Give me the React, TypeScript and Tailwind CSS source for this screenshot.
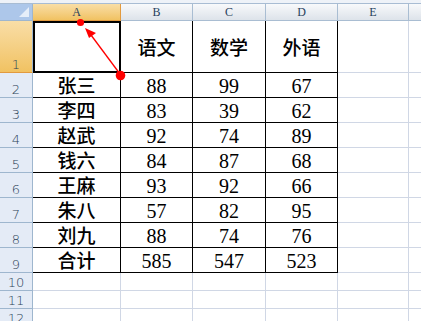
import React from "react";

const cols = ["A", "B", "C", "D", "E", "F"];
const data: string[][] = [
  ["", "语文", "数学", "外语"],
  ["张三", "88", "99", "67"],
  ["李四", "83", "39", "62"],
  ["赵武", "92", "74", "89"],
  ["钱六", "84", "87", "68"],
  ["王麻", "93", "92", "66"],
  ["朱八", "57", "82", "95"],
  ["刘九", "88", "74", "76"],
  ["合计", "585", "547", "523"],
];
const rowHeights = [52, 25, 25, 25, 25, 25, 25, 25, 25, 18, 18, 18];

export default function App() {
  const headFont = { fontFamily: '"Liberation Serif", "Noto Sans CJK SC", serif' };
  return (
    <div className="relative w-[421px] h-[321px] overflow-hidden bg-white">
      <div className="h-[4px] bg-[#eef2f8] border-b border-[#a8bcd3]" />
      <div
        className="grid"
        style={{
          gridTemplateColumns: "33px 88px 72px 73px 72px 71px 72px",
          gridTemplateRows: "17px " + rowHeights.map((h) => h + "px").join(" "),
        }}
      >
        <div className="relative bg-[#adc7ea] border-r border-b border-[#9eb6ce]">
          <div className="absolute right-[3px] bottom-[3px] w-0 h-0 border-l-[10px] border-l-transparent border-b-[10px] border-b-[#e6eef9]" />
        </div>
        {cols.map((c, i) => (
          <div
            key={c}
            className={
              "flex items-center justify-center text-[12px] text-[#27415c] border-b border-r " +
              (i === 0
                ? "bg-gradient-to-b from-[#f9dea6] to-[#f1c261] border-r-[#e29a3f] border-b-[#e29a3f]"
                : "bg-gradient-to-b from-[#f8f9fb] to-[#dde3ea] border-[#a9bdd2]")
            }
            style={headFont}
          >
            {c}
          </div>
        ))}
        {rowHeights.map((h, r) => {
          const rowData = data[r];
          return (
            <React.Fragment key={r}>
              <div
                className={
                  "flex items-end justify-center pb-[1px] text-[13px] leading-none text-[#2b4256] border-r border-b " +
                  (r === 0
                    ? "bg-gradient-to-b from-[#f9dea6] to-[#f1c261] border-r-[#9eb6ce] border-b-[#e29a3f]"
                    : "bg-[#e4ebf6] border-[#9eb6ce]")
                }
                style={{ fontFamily: '"DejaVu Sans", sans-serif', fontWeight: 300 }}
              >
                {r + 1}
              </div>
              {cols.map((c, ci) => {
                const inTable = rowData !== undefined && ci < 4;
                const val = inTable ? rowData[ci] : "";
                const isNum = /^\d+$/.test(val);
                return (
                  <div
                    key={c}
                    className={
                      "relative flex items-center justify-center border-r border-b text-black " +
                      (inTable ? "border-black " : "border-[#d0d7e5] ") +
                      (isNum ? "text-[20px] pt-[2px]" : "text-[19px] pt-[1px] font-medium")
                    }
                    style={{
                      fontFamily: isNum
                        ? '"Liberation Serif", serif'
                        : '"Noto Sans CJK SC", sans-serif',
                    }}
                  >
                    {r === 0 && ci === 0 && (
                      <div className="absolute left-0 top-0 right-[-1px] bottom-[-1px] border-2 border-black" />
                    )}
                    {val}
                  </div>
                );
              })}
            </React.Fragment>
          );
        })}
      </div>
      <svg className="absolute left-0 top-0" width="421" height="321">
        <line x1="120" y1="74" x2="91" y2="35" stroke="#ff0000" strokeWidth="1.3" />
        <polygon points="85,28 96,33 89,38" fill="#ff0000" />
        <circle cx="80.5" cy="22.5" r="3.6" fill="#ff0000" />
        <circle cx="120.5" cy="75.5" r="4.8" fill="#ff0000" />
      </svg>
    </div>
  );
}
